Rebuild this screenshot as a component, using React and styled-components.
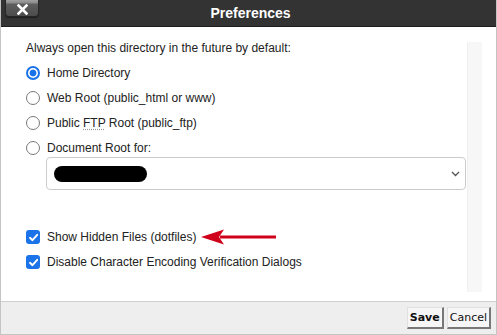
import React from 'react';
import styled, { createGlobalStyle } from 'styled-components';

const GlobalStyle = createGlobalStyle`
	html, body {
		margin: 0;
		padding: 0;
		background: #fff;
	}
	body {
		font-family: 'Liberation Sans', Arial, sans-serif;
	}
`;

const App = () => {
	const radioOptions = [
		{ label: 'Home Directory', checked: true },
		{ label: 'Web Root (public_html or www)' },
		{ label: <>Public <Abbr title="File Transfer Protocol">FTP</Abbr> Root (public_ftp)</> },
		{ label: 'Document Root for:' },
	];

	return (
		<>
			<GlobalStyle />
			<Dialog>
				<TitleBar>
					<CloseButton aria-label="close">
						<svg width="11" height="11" viewBox="0 0 11 11">
							<path d="M1.5 1.5 L9.5 9.5 M9.5 1.5 L1.5 9.5" stroke="#fff" strokeWidth="2.6" strokeLinecap="square" />
						</svg>
					</CloseButton>
					<Title>Preferences</Title>
					<span />
				</TitleBar>
				<Body>
					<Main>
						<Heading>Always open this directory in the future by default:</Heading>
						<RadioList>
							{radioOptions.map((opt, i) => (
								<Row key={i}>
									<Radio $checked={opt.checked} />
									<span>{opt.label}</span>
								</Row>
							))}
						</RadioList>
						<Select>
							<Redacted />
							<svg width="9" height="6" viewBox="0 0 9 6">
								<path d="M1 1 L4.5 4.5 L8 1" fill="none" stroke="#555" strokeWidth="1.3" />
							</svg>
						</Select>
						<CheckList>
							<Row>
								<CheckBox>
									<CheckMark />
								</CheckBox>
								<span>Show Hidden Files (dotfiles)</span>
								<Arrow width="78" height="16" viewBox="0 0 78 16">
									<path d="M20 6.6 L76 6.6 L76 9.4 L20 9.4 Z" fill="#d0021b" />
									<path d="M1 8 L24 0.5 L19 8 L24 15.5 Z" fill="#d0021b" />
								</Arrow>
							</Row>
							<Row>
								<CheckBox>
									<CheckMark />
								</CheckBox>
								<span>Disable Character Encoding Verification Dialogs</span>
							</Row>
						</CheckList>
					</Main>
					<ScrollTrack />
				</Body>
				<Footer>
					<Button $primary>Save</Button>
					<Button>Cancel</Button>
				</Footer>
			</Dialog>
		</>
	);
};

const CheckMark = () => (
	<svg width="11" height="11" viewBox="0 0 11 11">
		<path d="M2 5.8 L4.5 8.2 L9.2 2.8" fill="none" stroke="#fff" strokeWidth="1.9" strokeLinecap="round" strokeLinejoin="round" />
	</svg>
);

export default App;

const Dialog = styled.div`
	width: 497px;
	height: 335px;
	box-sizing: border-box;
	display: flex;
	flex-direction: column;
	border-left: 1px solid #c4c4c4;
	border-right: 1px solid #c4c4c4;
	border-bottom: 1px solid #c4c4c4;
	background: #fff;
	color: #222;
`;

const TitleBar = styled.div`
	height: 26px;
	flex: none;
	display: grid;
	grid-template-columns: 1fr auto 1fr;
	align-items: start;
	background: #333;
	border-bottom: 1px solid #1e1e1e;
	padding-left: 4px;
`;

const CloseButton = styled.button`
	width: 34px;
	height: 17px;
	padding: 0;
	border: 1px solid #262626;
	border-top: none;
	border-radius: 0 0 4px 4px;
	background: linear-gradient(#a0a0a0 0, #8a8a8a 3px, #5e5e5e 4px, #4c4c4c 100%);
	display: flex;
	align-items: center;
	justify-content: center;
	box-shadow: 0 1px 1px rgba(0, 0, 0, 0.4);
	svg {
		margin-top: 2px;
	}
`;

const Title = styled.div`
	color: #fff;
	font-weight: bold;
	font-size: 14px;
	line-height: 26px;
`;

const Body = styled.div`
	flex: 1;
	display: flex;
	background: #fff;
`;

const Main = styled.div`
	flex: 1;
	padding: 13px 0 0 25px;
	font-size: 12px;
`;

const Heading = styled.div`
	line-height: 16px;
	margin-bottom: 7px;
`;

const RadioList = styled.div`
	display: flex;
	flex-direction: column;
	gap: 5px;
`;

const CheckList = styled.div`
	display: flex;
	flex-direction: column;
	gap: 5px;
	margin-top: 37px;
`;

const Row = styled.div`
	height: 20px;
	display: flex;
	align-items: center;
	gap: 7px;
	line-height: 16px;
`;

const Abbr = styled.abbr`
	text-decoration: underline dotted #999;
	text-underline-offset: 2px;
`;

const Radio = styled.span`
	width: 14px;
	height: 14px;
	box-sizing: border-box;
	border-radius: 50%;
	flex: none;
	border: ${(p) => (p.$checked ? '2px solid #1a73e8' : '1.5px solid #7a7a7a')};
	background: ${(p) => (p.$checked ? 'radial-gradient(circle, #1a73e8 0 3.2px, #fff 3.7px)' : '#fff')};
`;

const CheckBox = styled.span`
	width: 14px;
	height: 14px;
	border-radius: 3px;
	background: #1a73e8;
	flex: none;
	display: flex;
	align-items: center;
	justify-content: center;
`;

const Select = styled.div`
	width: 420px;
	height: 33px;
	box-sizing: border-box;
	margin: -1px 0 0 20px;
	border: 1px solid #ccc;
	border-radius: 4px;
	display: flex;
	align-items: center;
	justify-content: space-between;
	padding: 0 5px 0 7px;
`;

const Redacted = styled.span`
	width: 93px;
	height: 16px;
	border-radius: 8px;
	background: #000;
`;

const Arrow = styled.svg`
	margin-left: -3px;
	flex: none;
`;

const ScrollTrack = styled.div`
	width: 14px;
	margin: 15px 14px 9px 1px;
	background: #f7f7f7;
	border-left: 1px solid #f0f0f0;
`;

const Footer = styled.div`
	height: 33px;
	flex: none;
	box-sizing: border-box;
	display: flex;
	justify-content: flex-end;
	align-items: center;
	gap: 3px;
	padding: 0 5px 0 0;
	background: #eee;
	border-top: 1px solid #cfcfcf;
`;

const Button = styled.button`
	height: 22px;
	padding: 0 2px;
	font-family: 'DejaVu Sans', Verdana, sans-serif;
	font-size: 11px;
	font-weight: ${(p) => (p.$primary ? 'bold' : 'normal')};
	color: #111;
	background: #f6f6f6;
	border: 1px solid #e0e0e0;
	border-right: 2px solid #777;
	border-bottom: 2px solid #777;
	border-radius: 0;
`;
